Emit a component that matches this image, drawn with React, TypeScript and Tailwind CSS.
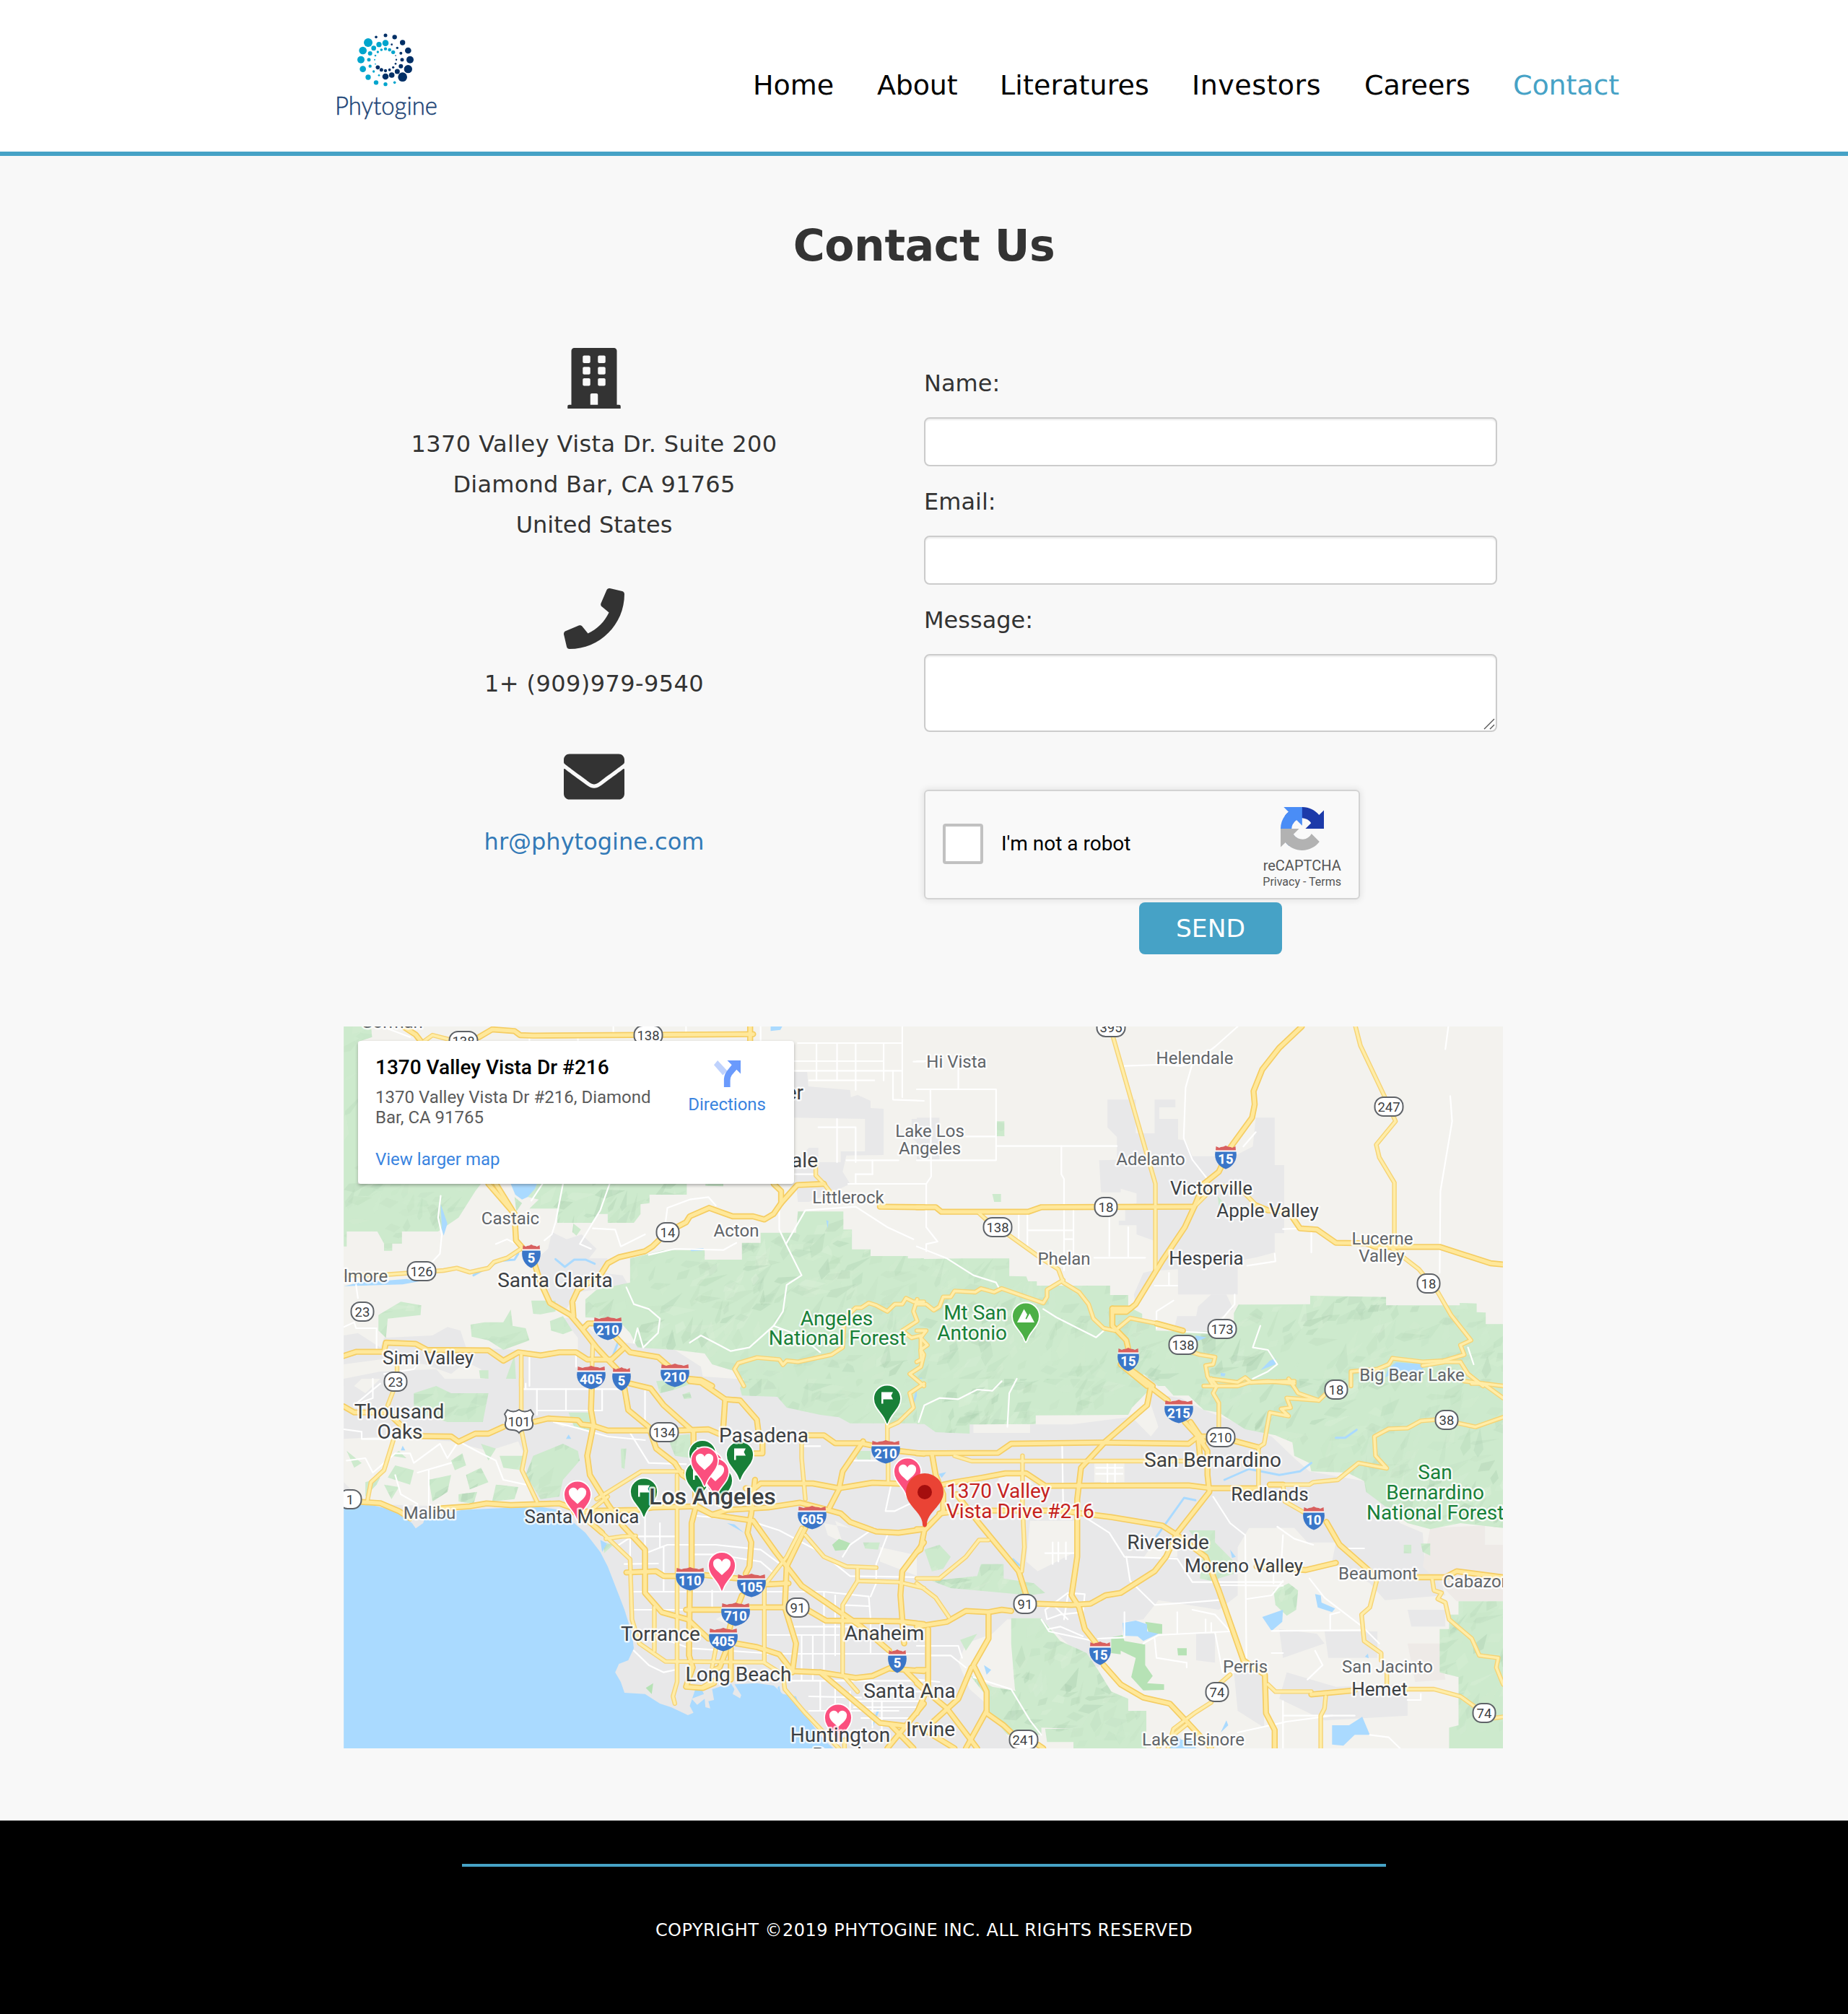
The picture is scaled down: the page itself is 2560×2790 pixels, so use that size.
import React from "react";
import { FaBuilding, FaPhone, FaEnvelope } from "react-icons/fa";

const SANS = "font-['Verdana','DejaVu_Sans',sans-serif]";

/* ---------- Logo ---------- */

const tealDots = [
  [210, 117, 18], [188, 150, 16], [180, 188, 15], [188, 227, 13], [210, 261, 11], [243, 283, 9.5], [282, 290, 8], [320, 283, 5.5],
  [282, 119, 13], [255, 125, 11], [233, 140, 10], [218, 162, 9], [213, 188, 7.5], [218, 215, 6.5], [233, 237, 5], [255, 253, 4],
  [314, 157, 8], [299, 147, 7], [282, 143, 6.5], [265, 147, 5.5], [250, 156, 5], [240, 171, 4], [237, 188, 3], [240, 206, 2.5],
];
const navyDots = [
  [243, 94, 5.5], [282, 87, 7.5], [320, 94, 9.5], [353, 117, 11], [376, 150, 13], [384, 188, 15], [376, 227, 17], [353, 260, 19],
  [308, 125, 4], [331, 139, 5], [346, 161, 6], [351, 188, 7.5], [346, 215, 9], [331, 237, 10.5], [308, 252, 11.5], [282, 258, 13],
  [250, 220, 8.5], [265, 230, 7.5], [282, 234, 6.5], [299, 230, 5.5], [314, 220, 5], [324, 205, 4], [327, 188, 3.5], [324, 171, 2.5],
];

function Logo() {
  return (
    <svg viewBox="0 0 600 540" className="mt-5 h-[180px] w-[200px] shrink-0">
      {tealDots.map(([x, y, r], i) => (
        <circle key={i} cx={x} cy={y} r={r} fill="#00a5cd" />
      ))}
      {navyDots.map(([x, y, r], i) => (
        <circle key={i} cx={x} cy={y} r={r} fill="#002f66" />
      ))}
      <text x="72" y="417" fontFamily="Lato" fontWeight="300" fontSize="104" textLength="426" lengthAdjust="spacingAndGlyphs" fill="#1d4577" stroke="#1d4577" strokeWidth="1.5">
        Phytogine
      </text>
    </svg>
  );
}

/* ---------- Map data: four tiles, each with its own grid ---------- */

type Tile = {
  id: string;
  transform: string;
  urban: string[];
  land?: string[];
  green: string[];
  park?: string[];
  blush?: string[];
  water: string[];
  creek?: string[];
  minor: string[];
  major: string[];
  thin: string[];
};

const tiles: Tile[] = [
  {
    id: "nw",
    transform: "matrix(.5165 0 0 .33333 -6 -12)",
    urban: [
      "570,890 610,920 650,900 690,960 670,1000 720,1000 700,1060 760,1070 775,1110 640,1140 600,1230 560,1180 520,1080 530,1000 560,960",
      "1220,225 1255,225 1258,285 1370,300 1372,330 1390,320 1425,345 1425,375 1460,378 1460,570 1360,572 1350,640 1370,690 1330,720 1260,765 1230,765 1220,600 1260,540 1285,540 1285,600 1345,600 1345,555 1410,555 1410,420 1220,415",
      "1535,420 1568,420 1568,540 1535,500",
      "250,1320 290,1285 325,1300 340,1370 480,1380 640,1400 640,1330 600,1250 630,1240 700,1330 770,1350 900,1380 970,1450 975,1490 1060,1500 1085,1530 400,1530 380,1460 340,1430 300,1480 230,1440 110,1420 12,1440 12,1320 50,1310 110,1370 120,1330",
      "12,1500 110,1470 260,1460 300,1530 12,1530",
    ],
    green: [
      "12,36 85,36 88,80 50,100 50,690 380,690 365,720 320,830 265,888 168,888 168,938 142,938 142,968 120,968 120,938 102,888 20,888 20,950 12,950",
      "485,690 932,690 932,735 832,735 832,770 808,775 808,815 790,852 720,852 720,815 695,815 678,852 585,852 585,793 510,793 535,755 480,735",
      "982,690 1030,690 1030,700 982,698",
      "628,855 648,880 636,905 625,890",
      "470,745 490,770 475,805",
      "1230,805 1352,805 1352,880 1375,880 1375,962 1425,962 1425,990 1525,990 1525,1000 1568,1000 1568,1530 1085,1530 1065,1470 1000,1440 980,1395 900,1380 800,1370 780,1310 745,1250 660,1245 660,1170 690,1130 780,1100 780,1000 870,965 980,965 980,1005 1080,1005 1080,935 1130,935 1130,893 1225,893",
      "105,1235 165,1180 220,1195 218,1235 130,1250 125,1330 105,1300",
      "352,1275 390,1265 440,1265 460,1212 465,1280 500,1290 510,1340 440,1380 400,1340 355,1325",
      "515,1175 580,1175 580,1220 540,1232 520,1230",
      "565,1260 600,1240 625,1300 600,1315 568,1300",
      "375,1465 400,1465 400,1500 378,1498",
      "470,1400 475,1530 440,1530",
    ],
    water: [
      "460,690 530,690 525,710 505,745 490,755 472,735",
      "272,775 290,855 280,905 275,880",
      "60,1098 120,1093 180,1085 215,1095 170,1108 12,1115",
      "1157,36 1188,36 1183,50 1157,55",
      "1306,840 1312,845 1310,875",
    ],
    creek: ["580,1003 605,1035 630,1005 660,1005 685,1022", "360,1070 430,1010 470,1005 480,980", "945,965 975,962", "735,1400 750,1340"],
    minor: [
      "1230,105 1510,105", "1220,180 1460,180", "1460,105 1460,260", "1385,105 1385,300", "1335,105 1335,260", "1280,105 1280,260",
      "1220,220 1510,220", "1260,260 1435,260", "1510,36 1510,330", "1540,182 1568,182", "1285,455 1385,455 1385,600", "1360,592 1500,592",
      "1365,690 1568,690", "1430,592 1430,650", "1335,420 1335,600", "1485,220 1485,340 1568,345", "1220,650 1278,650", "1385,650 1430,650",
      "735,36 735,68", "820,36 820,68", "930,36 930,68", "510,74 510,96", "640,74 640,96", "1130,36 1130,96", "860,74 860,96",
      "272,740 265,830 275,900 270,980 240,1030", "545,690 515,760", "600,690 580,850 570,900 550,925", "725,690 700,800 645,940 675,960",
      "875,850 880,790 940,755 990,745 1010,780", "1180,780 1180,880 1198,940 1240,1070 1200,1110 1190,1220 1165,1280 1100,1370 1050,1385 970,1320 940,1350",
      "1198,940 1250,800 1385,785 1470,870 1540,920", "770,1120 790,1190 830,1210 860,1250 855,1310 815,1370", "1065,935 1030,965 900,960 830,985",
      "510,1410 510,1530", "635,1400 635,1450", "1165,1280 1235,1320 1290,1390", "45,1110 50,1165", "12,1285 40,1265 45,1290 100,1290 100,1380",
      "120,1480 200,1460 215,1430", "680,875 740,880 755,950 820,900", "1385,690 1385,650", "790,1350 800,1290 815,1370", "130,45 190,80", "420,940 450,920 475,940",
    ],
    major: [
      "400,690 470,815 474,925 520,1005 540,1100 565,1185 620,1235 650,1290 690,1370 720,1420 745,1460",
      "420,690 470,815",
      "1165,690 1185,720 1185,770 1165,815 1140,838 1110,825 1055,825 992,790 940,825 930,850 880,890 840,950 820,970 750,995 720,1020 700,1070 640,1130 625,1180 628,1240",
      "1185,770 1228,695 1300,690",
      "375,80 410,48 470,55 485,72 520,74 1110,68", "1102,36 1102,96",
      "12,1405 45,1388 120,1388 125,1350 205,1355 235,1380 400,1382 440,1425 480,1390 540,1403 590,1390 635,1390 665,1420 730,1420 765,1370",
      "655,1290 668,1270 690,1270", "740,1325 780,1390 855,1410 885,1450", "935,1500 970,1505 1000,1530", "1450,785 1568,787",
      "175,40 205,70 220,100",
    ],
    thin: [
      "12,1070 120,1068 280,1050 315,1040 350,1057 400,1040 415,1015 450,998 485,962",
      "1278,600 1278,655 1300,690 1320,730", "1440,745 1450,785", "225,100 250,72 300,92", "680,1350 678,1450", "155,1440 155,1470", "488,1400 488,1530",
      "1085,1530 1060,1460 1070,1435 1120,1412 1180,1420 1190,1442 1200,1425 1230,1430 1320,1400 1350,1370 1355,1250 1385,1205 1400,1205 1420,1185 1440,1195 1470,1220 1490,1190 1510,1190 1520,1165 1540,1180 1568,1180",
      "1550,1170 1540,1220 1550,1260 1510,1300 1535,1330 1560,1320 1560,1380 1568,1400 1560,1450 1530,1480 1568,1530",
    ],
  },
  {
    id: "ne",
    transform: "matrix(.523 0 0 .33333 794 -12)",
    urban: [
      "505,340 580,340 580,480 630,480 630,340 685,340 685,372 642,372 642,420 692,420 692,505 712,510 730,575 840,575 890,535 898,415 948,415 948,612 973,612 973,895 948,895 948,975 900,995 850,1010 850,1150 692,1150 692,1045 640,1050 600,1150 580,1200 575,1150 600,1060 640,1045 635,930 582,900 582,862 535,862 535,843 552,843 552,780 582,770 582,730 540,710 540,725 488,725 483,592 530,590 530,495 505,455",
      "0,415 60,415 60,590 0,590",
      "745,1200 780,1150 820,1150 838,1210 800,1250 760,1310 680,1300 690,1240 740,1240",
      "600,1490 640,1500 650,1530 620,1530",
    ],
    green: [
      "0,1003 120,1000 245,1000 245,1073 290,1075 295,1095 318,1095 318,1113 512,1113 512,1152 560,1152 560,1200 597,1230 597,1258 633,1280 633,1300 740,1305 840,1300 840,1228 852,1192 1042,1190 1042,1155 1243,1160 1243,1195 1438,1195 1438,1185 1483,1187 1483,1223 1507,1225 1507,1273 1553,1273 1553,1530 640,1530 600,1480 605,1530 0,1530",
      "210,430 232,430 232,492 210,492", "200,732 223,732 223,765 205,765", "797,740 822,785 820,800 800,780",
    ],
    water: ["738,1320 768,1328 740,1345", "950,1415 950,1440 910,1465 935,1425", "1270,1432 1345,1440 1340,1462 1300,1475 1280,1465 1240,1495 1250,1455", "805,1475 818,1478 815,1490 805,1488"],
    minor: [
      "0,180 25,180", "110,210 110,297", "0,297 210,297 210,592 0,592", "36,300 38,660 25,690 25,870 55,930 25,940 25,970", "0,690 25,690", "210,533 530,533",
      "383,533 383,650 390,670 390,1050", "415,800 415,990", "295,883 412,883", "470,997 605,997", "130,493 210,493", "550,200 640,195 700,200 735,185 790,120 850,36",
      "730,190 712,290 707,500 730,590 775,680", "1408,36 1400,130", "1413,325 1418,430 1387,720 1385,1060", "0,950 80,1000 150,1070 210,1100 220,1130",
      "335,1210 370,1245 475,1328 495,1300", "910,1280 890,1370 930,1380 955,1440 930,1470 890,1500", "1460,1370 1475,1440", "270,820 270,920", "293,815 293,960",
      "510,830 510,990", "560,870 560,995", "970,878 1015,875", "1045,890 1045,975", "390,920 412,920", "865,535 898,475", "630,1113 690,1113", "668,1060 668,1113",
      "635,1290 635,1220 680,1175", "875,1030 950,1012 948,980", "842,1150 842,1190 820,1230 780,1310 710,1305",
    ],
    major: [
      "1020,36 960,125 915,215 892,305 895,360 888,415 830,540 800,640 760,690 735,785 710,870 650,1010 580,1190 555,1222 520,1222", "518,1208 565,1208",
      "518,1208 518,1280 555,1340 560,1375", "540,1440 610,1530", "565,1460 625,1530",
      "0,787 50,787 65,806 295,806 330,787 735,785", "900,780 930,800 985,805 1015,875 1060,880 1110,935 1190,937 1215,952 1385,952 1520,1020 1553,1025",
      "635,1270 705,1300",
    ],
    thin: [
      "520,80 632,690 632,1045", "735,785 790,700 850,700 900,780", "1162,36 1175,115 1240,330 1268,430 1217,527 1225,580 1265,685 1265,950",
      "1260,960 1330,1045 1380,1140 1415,1235 1468,1340 1440,1360 1450,1400 1395,1425 1340,1430 1260,1415",
      "165,812 185,840 250,910 330,1000 375,1045 388,1100 430,1140 455,1190 468,1250 495,1290 525,1300 565,1248 635,1270 705,1300",
      "730,1390 750,1400 790,1410 785,1440 765,1445 770,1490 785,1530",
      "388,1090 345,1130 345,1160 335,1185 225,1125 205,1140 170,1125 155,1140 100,1135 90,1160 70,1160 60,1200 45,1215 25,1190 0,1190",
      "0,1300 25,1300 10,1330 28,1360 10,1380 12,1420 0,1430", "775,1500 850,1515 870,1495 885,1515 930,1510 1000,1520",
      "1440,1430 1460,1480 1500,1530", "1260,1415 1250,1440 1220,1460 1150,1470 1150,1530", "1340,1445 1400,1430 1440,1430", "1450,1510 1553,1530",
    ],
  },
  {
    id: "sw",
    transform: "matrix(.5165 0 0 .33333 -6 488)",
    urban: ["12,0 1570,0 1570,1536 12,1536"],
    land: [
      "12,250 130,240 300,260 400,300 480,260 500,330 500,430 520,510 400,525 290,530 70,520 12,430", "1300,600 1370,620 1330,590 1350,680 1310,650",
      "1450,700 1568,740 1568,830 1450,760", "560,170 650,180 600,200", "60,0 110,0 70,60 40,30", "1010,1000 1050,960 1040,1020",
    ],
    green: [
      "1085,0 1568,0 1568,185 1370,185 1340,160 1290,150 1200,120 1175,75 1080,70 1075,40", "200,60 260,30 300,60 400,60 385,180 290,180 230,150 200,120",
      "520,320 600,270 640,300 645,340 600,420 590,490 540,500 500,400", "880,240 940,230 945,330 900,320", "615,140 680,140 680,220 630,200", "850,10 930,0 945,20 900,45 860,60",
      "920,65 940,55 945,80 925,85", "755,290 770,290 765,375 757,370", "70,430 110,410 100,440 70,490", "150,360 200,380 190,440 130,410", "240,420 300,400 290,470 250,510",
      "340,400 380,370 400,430 350,460", "430,320 500,320 490,380 440,370", "20,300 60,350 40,370", "380,270 420,290 400,340", "140,320 160,300 180,330", "300,340 330,310 340,360 310,380",
      "120,440 160,450 140,500", "420,440 480,450 470,500 410,510", "320,480 370,470 360,520 320,510", "1380,300 1425,300 1425,335 1390,335", "710,680 735,690 710,725",
      "1215,1080 1225,1080 1222,1140", "1405,680 1450,680 1445,710 1410,705",
    ],
    park: ["1322,690 1340,665 1372,685 1365,710 1330,715", "822,1285 842,1265 838,1310"],
    water: [
      "12,520 60,515 150,548 195,600 205,622 225,600 230,575 330,545 530,530 590,545 630,600 660,640 700,720 720,780 745,880 765,960 785,1060 790,1120 775,1170 750,1185 740,1220 755,1260 765,1305 820,1310 860,1350 890,1365 935,1398 950,1388 940,1360 955,1290 970,1285 978,1310 945,1330 960,1355 980,1330 982,1365 995,1370 990,1340 1005,1335 1000,1290 1050,1265 1060,1290 1055,1310 1075,1328 1078,1315 1060,1270 1120,1265 1165,1275 1190,1310 1225,1320 1235,1360 1265,1430 1300,1500 1325,1536 12,1536",
      "700,670 718,685 705,720", "608,250 615,232 622,250", "165,298 170,278 177,298", "1040,600 1060,605 1085,640", "1175,1285 1180,1275 1185,1310",
    ],
    creek: ["1445,1380 1430,1440", "1560,0 1548,60 1540,100"],
    minor: [
      "490,43 760,43", "530,132 705,132", "530,43 530,150", "608,43 608,130", "705,43 705,132", "820,50 820,215", "780,225 830,350 930,355", "820,560 820,700", "800,655 910,655",
      "830,720 880,690 1010,690 1130,710 1200,790", "790,885 1300,885 1420,905 1425,1000", "790,960 930,960", "765,770 855,768", "950,730 1010,730 1130,760 1160,800", "960,570 1100,590 1180,630 1290,720 1370,820 1568,825",
      "1220,1030 1400,1030", "1145,1065 1340,1065", "1140,1143 1568,1143", "1190,1255 1568,1255", "1300,885 1300,1210", "1240,280 1290,280", "1425,1000 1425,1140",
      "1260,1380 1500,1380", "1370,1300 1370,1400", "1430,1255 1430,1450", "1290,1255 1290,1380", "1380,1340 1568,1340", "1400,1410 1540,1410", "1240,1070 1240,1250", "1330,900 1330,1150",
      "1260,1320 1400,1325", "1330,1255 1330,1400", "1450,1300 1568,1300", "1270,1070 1270,1250", "1350,940 1420,945", "1380,1365 1568,1365", "1455,1340 1455,1480",
      "575,180 640,205 720,240 820,255", "1480,440 1465,550 1490,550 1530,520", "1435,620 1370,690 1350,740", "110,20 40,110", "90,0 90,80 40,110", "1470,650 1440,770 1440,850 1425,905",
      "20,340 70,330 90,390 150,310 190,310 200,350 270,270 290,330 320,260 380,310 420,340 440,420 500,440", "150,400 165,480 210,520", "240,380 240,520", "210,390 300,350",
      "12,210 60,220 60,250 140,250", "790,1130 830,1190 870,1220 900,1210", "740,700 780,660", "1380,340 1470,340", "780,640 780,880", "830,1060 940,1120 1140,1140", "1470,300 1470,430",
      "500,43 500,20", "860,600 860,700", "1000,880 1000,960", "870,700 870,880",
    ],
    major: [
      "12,115 40,140 130,140 170,200", "200,238 300,240 320,262 365,228 400,228 440,200", "525,178 560,165 640,172 650,190 680,195 720,215 835,215", "910,215 990,210 1020,230",
      "1250,235 1300,235 1330,268 1400,268 1500,300 1568,312", "677,40 675,130 682,190 665,320 672,400 720,520 760,610 820,710 820,890 865,970 935,1000 990,1080",
      "1065,1100 1120,1115 1180,1145 1215,1215 1290,1220 1385,1243 1430,1235 1480,1200", "765,40 775,130 830,200 850,290 900,350 920,400 960,440", "780,20 835,40 870,110 950,220 950,280",
      "955,530 1000,565 1110,590 1170,720 1240,860 1400,1030 1475,1130", "940,10 970,15 1035,85 1075,90 1120,170 1125,230", "1035,85 1030,200", "1125,230 1135,250 1135,310 1115,310",
      "60,512 110,517 160,550 190,580", "260,540 350,530 395,518 460,525 590,518 630,540 705,640", "630,555 700,548 800,545 840,535 960,530 1000,565 1040,545 1150,535 1235,515 1310,545 1345,560 1370,595 1440,635 1500,640 1568,625",
      "1090,455 1110,460 1130,435 1270,435 1340,455 1430,432 1568,440", "955,450 955,540 945,600 945,790", "940,880 938,1150 948,1200 930,1280 975,1285 1005,1265", "1115,420 1105,560 1095,640 1105,680 1100,780 1090,810",
      "1080,900 1070,940", "1050,1020 1045,1050", "1040,1120 1020,1200 1005,1210", "1050,1120 1050,1250", "1250,620 1200,780 1195,950 1225,1100 1215,1220", "770,805 850,800 870,820 905,820",
      "975,815 1070,830", "1140,855 1205,850", "930,960 1030,960", "1100,950 1200,950", "1255,960 1305,1005 1500,1008 1568,1020", "1405,260 1350,385 1340,460 1315,535",
      "1568,680 1510,800 1505,900 1515,1100", "1290,1220 1450,1430 1530,1445", "1520,1215 1568,1290", "1568,1350 1470,1536", "1480,1440 1540,1536", "1480,1205 1568,1215",
    ],
    thin: [
      "488,0 488,210 500,300 490,380 530,510", "145,50 130,110", "145,255 120,380 85,430 75,510", "705,640 780,750 785,1000 805,1100 875,1175 1140,1178", "1470,185 1470,260",
      "1472,200 1500,180 1540,120 1530,60 1568,20", "906,400 906,1260 895,1320 900,1350", "845,950 845,1130", "690,500 810,385 920,385", "1240,250 1240,330 1250,500", "1472,340 1472,432",
      "1240,620 1200,740 1140,860 1140,1180 1190,1230 1195,1290 1250,1390 1340,1536", "1250,650 1300,740 1360,780 1440,785", "1390,790 1390,840 1500,845 1568,870", "1390,840 1350,940 1350,1230 1390,1300",
      "715,665 760,655 795,653", "1010,1120 1000,1200", "970,1285 1020,1240", "1355,1500 1355,1536", "680,540 720,490",
    ],
  },
  {
    id: "se",
    transform: "matrix(.523 0 0 .33333 794 488)",
    urban: [
      "0,188 150,190 150,225 300,225 300,190 410,190 560,160 620,60 700,80 760,130 940,240 1000,330 1040,385 1185,425 1190,470 1230,500 1280,600 1340,640 1345,740 1380,800 1400,900 1240,920 1200,850 1100,760 1110,680 1000,680 1000,620 880,620 850,700 850,900 800,960 640,920 600,1000 550,1010 540,1100 480,1200 440,1160 330,1000 240,1000 200,1060 130,1100 110,1180 140,1290 220,1400 250,1536 0,1536",
      "960,1040 1060,1060 1080,1100 970,1160", "1080,1050 1220,1050 1220,1160 1090,1160", "840,1220 920,1230 920,1450 850,1380", "980,1220 1110,1280 1300,1270 1300,1400 1080,1420 960,1330",
      "1300,960 1400,960 1400,1030 1310,1030", "740,1060 790,1060 790,1180 740,1170",
    ],
    land: ["220,400 290,400 310,440 210,450", "300,590 420,590 420,720 320,800 290,760", "950,620 1000,620 1070,740 990,740 900,700", "560,100 610,60 640,200 620,240 570,160", "620,700 690,690 690,740 600,745", "470,350 550,350 550,430 470,430"],
    blush: ["1360,620 1505,610 1505,690 1553,690 1553,925 1430,925 1340,780", "1300,1100 1385,1100 1400,1250 1320,1260"],
    green: [
      "0,0 590,0 620,40 570,120 560,150 315,152 315,188 140,190 140,228 50,222 20,188 0,188",
      "640,0 1553,0 1553,620 1440,600 1360,625 1300,600 1190,470 1185,425 1140,390 1045,385 1040,350 1000,320 995,265 950,235 870,210 800,140 760,130 720,70 680,70",
      "40,840 160,820 170,770 230,770 230,830 310,850 340,890 300,900 160,880 90,870", "20,710 60,690 90,740 70,790 40,800",
      "250,995 330,995 380,1090 450,1140 480,1210 515,1300 560,1330 560,1380 608,1380 608,1536 415,1536 415,1455 330,1450 290,1400 260,1290 250,1100", "115,1085 160,1060 130,1130",
      "140,1230 200,1280 270,1300 290,1400 330,1450 330,1480 240,1480 190,1390 180,1310", "720,630 790,630 790,680 840,760 840,810 780,840 750,830 760,700", "945,880 985,850 1010,880 1005,960 980,985 950,940",
      "1435,925 1553,925 1553,1536 1410,1536 1410,1450 1435,1440 1435,1240 1385,1220 1385,1040 1410,1040 1410,980 1435,980", "1290,690 1310,690 1310,725 1290,725", "1335,685 1360,685 1360,735 1340,720",
      "340,1455 415,1455 415,1510 345,1510",
    ],
    park: ["515,1075 545,1065 550,1090 605,1105 605,1190 625,1235 610,1265 655,1270 655,1293 600,1295 568,1240 580,1160 540,1130 540,1145 515,1140", "605,1010 650,1020 650,1060 615,1060", "690,1120 715,1120 715,1150 692,1150"],
    water: [
      "545,1015 580,1005 610,1020 610,1050 640,1060 600,1090 585,1070 548,1068", "915,990 970,960 968,1010 940,1048", "1055,895 1070,900 1072,930 1108,955 1100,970 1062,950",
      "1100,1440 1145,1440 1180,1405 1200,1480 1160,1480 1130,1525 1100,1520", "178,1190 197,1210 185,1230", "805,1470 820,1420 825,1440", "830,710 845,740 835,745", "685,1470 700,1500 730,1500 740,1536 670,1536",
      "58,395 78,388 66,412", "1187,1155 1195,1142 1197,1162",
    ],
    creek: ["738,505 708,495 635,655", "815,420 880,375 960,400 1015,385 1045,350", "1110,245 1135,245 1165,212", "255,750 272,775"],
    minor: [
      "385,270 388,550", "785,490 830,600 870,650 873,1160", "450,580 510,640 550,740 690,748 730,845 970,845", "555,740 565,840 630,940 720,930 800,920", "805,858 970,860", "875,915 940,900 970,840",
      "955,615 1000,665 1050,690", "550,970 550,1075 480,1080", "640,1065 830,1050", "600,1100 640,1065", "690,970 690,1060", "940,1048 1180,1045", "1040,830 1080,910 1180,1030 1225,1100", "970,1340 970,1536",
      "730,960 790,980 830,1050", "765,1000 765,1055", "780,1015 780,1050", "340,960 400,890 445,895 440,970 380,980 345,1000 340,960", "350,1040 380,1030 440,1070", "330,1000 350,1050 470,1090",
      "630,1080 635,1160 715,1180 715,1200", "790,1055 810,1220 860,1220", "1055,1130 1075,1190 1035,1250", "940,1140 970,1140", "850,1470 980,1425 1100,1400", "1200,1480 1250,1490 1280,1536", "340,725 415,725",
      "360,680 360,770", "375,680 375,760", "395,680 395,750", "0,1110 110,1110 120,1160", "150,1240 250,1290 300,1420 330,1480", "265,0 245,60 240,200", "5,180 20,110 60,80 110,85 160,45 200,50 225,10",
      "475,370 545,370", "475,395 545,395", "505,350 505,430", "525,355 525,430", "970,650 965,780", "945,810 945,850", "1095,1040 1095,980 1120,970", "30,1150 90,1150 130,1200", "0,1250 60,1260",
      "1130,705 1185,705", "355,930 400,1000", "400,900 390,1000", "970,1400 1160,1400", "1300,1335 1335,1335 1335,1310",
    ],
    major: [
      "0,310 215,308 250,270 485,265 720,270 745,240 770,240", "845,260 905,285", "70,440 100,430 170,412 235,393 290,393 340,445 720,443 780,455 905,455", "935,440 970,440",
      "1085,595 1120,690 1200,800", "620,30 610,110 500,260 435,370 425,500 425,740 410,900 430,950 445,1040 480,1110", "495,1190 540,1270 600,1325 670,1350 730,1450 780,1536",
      "590,0 665,90", "710,180 745,240 770,300 770,400 775,470 690,640", "725,180 760,260", "745,240 750,320",
      "60,560 120,548 380,548 515,575 650,610 690,650 765,740 800,880 865,1170 922,1230 925,1390 948,1460 948,1536", "690,640 660,740 630,800 540,890 500,900 460,935 410,940 320,935", "250,965 225,960 190,970 130,965 80,1010 0,1030",
      "105,480 165,600 270,800 290,900", "40,310 50,400 70,480 70,550 20,630 10,710 0,720", "1320,825 1400,825 1430,800 1553,825", "190,980 190,1080 150,1190 185,1300 185,1390 230,1440 250,1470",
      "0,1265 80,1370 160,1536", "145,1200 110,1330 40,1430", "30,1040 30,1280 0,1390", "185,1380 130,1536", "0,1440 100,1536", "0,1210 25,1210", "320,1520 335,1536", "0,625 20,625",
      "1045,1312 1160,1295", "900,780 1030,795 1110,765",
    ],
    thin: [
      "905,285 920,270 935,140 985,155 965,125 990,120 980,80 1065,90 1085,60", "100,320 145,342 600,342 720,342", "905,455 905,290", "935,440 1040,440 1050,430 1115,420 1170,350 1245,372 1215,320 1212,240 1250,208 1300,205 1335,175 1375,170",
      "970,440 975,510 1025,555", "1200,800 1218,840 1200,950 1178,980 1185,1090 1230,1140 1230,1170", "1435,185 1480,200 1553,160", "190,670 165,670 130,740 60,830 0,830", "0,850 50,910 85,990",
      "280,320 280,520 285,700 278,800", "1365,830 1370,880 1390,890 1380,915 1400,930 1410,1000 1470,1080 1490,1150 1540,1160 1535,1200 1553,1270", "780,0 795,30 785,60 800,100 800,200",
      "830,1230 800,1270", "780,1345 735,1390 680,1455 665,1536", "930,1270 950,1300 1045,1300", "1290,1290 1370,1290 1440,1320 1480,1365", "1530,1410 1553,1405", "1083,1320 1080,1370 1070,1400 1070,1536",
      "1245,1210 1245,1270", "985,0 1010,60 1065,90", "1470,20 1500,20 1553,80", "760,30 850,30 880,15 1000,10", "640,1530 720,1430",
    ],
  },
];

/* Deterministic facets that suggest shaded relief inside the forests. */
function facets(seed: number, count: number) {
  let s = seed;
  const rnd = () => {
    s = (s * 16807) % 2147483647;
    return s / 2147483647;
  };
  const out: { d: string; fill: string; o: number }[] = [];
  for (let i = 0; i < count; i++) {
    const x = rnd() * 1568;
    const y = rnd() * 1536;
    const a = -0.75 + (rnd() - 0.5) * 1.5;
    const l = 30 + rnd() * 60;
    const w = 12 + rnd() * 24;
    const p = [
      [x, y],
      [x + Math.cos(a + 0.5) * w, y + Math.sin(a + 0.5) * w * 1.5],
      [x + Math.cos(a) * l, y + Math.sin(a) * l * 1.5],
      [x + Math.cos(a - 0.6) * w * 0.8, y + Math.sin(a - 0.6) * w * 1.2],
    ];
    const ridge = 0.5 + 0.5 * Math.sin(x / 150 + y / 110 + seed);
    const dark = rnd() > 0.38;
    out.push({
      d: p.map((q) => q.map((v) => v.toFixed(0)).join(",")).join(" "),
      fill: dark ? "#a6caab" : "#e0f2dc",
      o: (0.06 + rnd() * 0.2) * (0.5 + ridge),
    });
  }
  return out;
}

const Fill = ({ list, color }: { list?: string[]; color: string }) => (
  <>
    {(list ?? []).map((p, i) => (
      <polygon key={i} points={p} fill={color} />
    ))}
  </>
);

const Lines = ({ list, color, w }: { list?: string[]; color: string; w: number }) => (
  <>
    {(list ?? []).map((p, i) => (
      <polyline key={i} points={p} fill="none" stroke={color} strokeWidth={w} strokeLinejoin="round" strokeLinecap="round" vectorEffect="non-scaling-stroke" />
    ))}
  </>
);

type Label = [text: string, x: number, y: number, size: number, kind: "town" | "city" | "park" | "hit" | "metro", anchor?: "start" | "middle" | "end"];

const labels: Label[] = [
  ["Gorman", 67, 2, 24, "town"], ["er", 637, 101, 28, "city", "end"], ["ale", 657, 195, 28, "city", "end"], ["Castaic", 231, 274, 24, "town"],
  ["Acton", 544, 291, 24, "town"], ["Littlerock", 699, 245, 24, "town"], ["Lake Los", 812, 153, 24, "town"], ["Angeles", 812, 177, 24, "town"],
  ["lmore", 0, 354, 24, "town", "start"], ["Santa Clarita", 293, 361, 28, "city"], ["Simi Valley", 117, 468, 26, "city"], ["Angeles", 683, 414, 28, "park"],
  ["National Forest", 684, 441, 28, "park"], ["Hi Vista", 849, 57, 24, "town"], ["Helendale", 1179, 52, 24, "town"], ["Adelanto", 1118, 192, 24, "town"],
  ["Victorville", 1202, 233, 26, "city"], ["Apple Valley", 1280, 264, 26, "city"], ["Hesperia", 1195, 330, 26, "city"], ["Phelan", 998, 330, 24, "town"],
  ["Lucerne", 1439, 302, 24, "town"], ["Valley", 1438, 326, 24, "town"], ["Mt San", 919, 406, 28, "park", "end"], ["Antonio", 919, 434, 28, "park", "end"],
  ["Big Bear Lake", 1480, 491, 24, "town"], ["Thousand", 77, 543, 28, "city"], ["Oaks", 78, 571, 28, "city"], ["Pasadena", 582, 576, 28, "city"],
  ["Los Angeles", 511, 662, 32, "metro"], ["Malibu", 119, 682, 24, "town"], ["Santa Monica", 330, 688, 26, "city"], ["Torrance", 439, 851, 28, "city"],
  ["Long Beach", 547, 907, 28, "city"], ["Anaheim", 749, 850, 28, "city"], ["Santa Ana", 784, 930, 28, "city"], ["Huntington", 688, 991, 28, "city"],
  ["Beach", 688, 1019, 28, "city"], ["Irvine", 813, 983, 28, "city"], ["1370 Valley", 835, 653, 28, "hit", "start"], ["Vista Drive #216", 835, 681, 28, "hit", "start"],
  ["San Bernardino", 1204, 610, 28, "city"], ["San", 1512, 627, 28, "park"], ["Bernardino", 1512, 655, 28, "park"], ["National Forest", 1417, 683, 28, "park", "start"],
  ["Redlands", 1283, 657, 26, "city"], ["Riverside", 1142, 724, 28, "city"], ["Moreno Valley", 1247, 756, 26, "city"], ["Beaumont", 1433, 766, 24, "town"],
  ["Cabazon", 1523, 777, 24, "town", "start"], ["Perris", 1249, 895, 24, "town"], ["San Jacinto", 1446, 895, 24, "town"], ["Hemet", 1435, 927, 26, "city"],
  ["Lake Elsinore", 1177, 996, 24, "town"],
];

const labelColor = { town: "#616569", city: "#3c4043", park: "#188038", hit: "#c5221f", metro: "#3c4043" };

const routes: [string, number, number][] = [
  ["138", 166, 20], ["138", 422, 12], ["14", 449, 285], ["126", 108, 339], ["23", 26, 395], ["23", 72, 492], ["395", 1063, 1], ["247", 1448, 111],
  ["18", 1056, 250], ["138", 906, 278], ["18", 1503, 356], ["173", 1217, 419], ["138", 1163, 441], ["134", 444, 562], ["1", 9, 655], ["91", 629, 805],
  ["18", 1375, 503], ["38", 1528, 545], ["210", 1215, 569], ["91", 944, 800], ["74", 1210, 922], ["74", 1580, 951], ["241", 942, 988],
];

const interstates: [string, number, number][] = [
  ["5", 260, 318], ["210", 366, 418], ["405", 343, 486], ["5", 385, 488], ["210", 459, 483], ["15", 1222, 181], ["15", 1087, 461], ["210", 751, 589],
  ["605", 649, 680], ["110", 480, 765], ["105", 565, 774], ["710", 543, 814], ["405", 526, 849], ["5", 767, 879], ["215", 1157, 533], ["10", 1344, 681], ["15", 1048, 868],
];

function Interstate({ n, x, y }: { n: string; x: number; y: number }) {
  const w = n.length === 3 ? 20 : n.length === 2 ? 15 : 13;
  return (
    <g transform={`translate(${x} ${y})`}>
      <path d={`M${-w + 1.5} -15 L${-w * 0.6} -13 L${-w * 0.45} -14 Q${-w * 0.2} -14 0 -16 Q${w * 0.2} -14 ${w * 0.45} -14 L${w * 0.6} -13 L${w - 1.5} -15 L${w - 1} -9 H${-w + 1} Z`} fill="#d8605f" />
      <rect x={-w + 0.5} y={-9.5} width={w * 2 - 1} height={2.5} fill="#fff" />
      <path d={`M${-w + 0.5} -7.5 H${w - 0.5} C${w + 1.5} 4 ${w - 5} 13 0 16.5 C${-w + 5} 13 ${-w - 1.5} 4 ${-w + 0.5} -7.5 Z`} fill="#3a76c8" />
      <text y="8.5" textAnchor="middle" fontFamily="Roboto" fontSize="18" fontWeight="500" fill="#fff" stroke="#fff" strokeWidth="0.5" letterSpacing="0.3">
        {n}
      </text>
    </g>
  );
}

const PIN = "M0 36 C-1 36 -2 33 -3 30.5 C-7 20 -19 13 -19 0 A19 19 0 1 1 19 0 C19 13 7 20 3 30.5 C2 33 1 36 0 36 Z";

function Pin({ x, y, kind }: { x: number; y: number; kind: "flag" | "heart" | "peak" }) {
  const fill = kind === "flag" ? "#188038" : kind === "heart" ? "#fb4f7e" : "#4caf46";
  return (
    <g transform={`translate(${x} ${y})`}>
      <path d={PIN} fill={fill} stroke="#fff" strokeWidth="1.8" />
      {kind === "flag" && <path d="M-8 -9 H8 L5.5 -4 L8 1 H-5.500 V7 H-8 Z" fill="#fff" />}
      {kind === "heart" && <path d="M0 13 C-5 8 -12 3.500 -12 -2.500 A6.2 6.2 0 0 1 0 -5.500 A6.2 6.2 0 0 1 12 -2.500 C12 3.500 5 8 0 13 Z" fill="#fff" />}
      {kind === "peak" && <path d="M-12 8.500 L-2.500 -10 L2 -2.500 L-0.500 3.500 L1 4 L5.500 -4 L12 8.500 Z" fill="#fff" />}
    </g>
  );
}

function MapCanvas() {
  return (
    <svg viewBox="0 0 1606 1000" className="block h-[1000px] w-[1606px]" fontFamily="Roboto, sans-serif">
      <rect width="1606" height="1000" fill="#f3f2ee" />
      {tiles.map((t, i) => (
        <g key={t.id} transform={t.transform}>
          <clipPath id={`forest-${t.id}`}>
            {t.green.map((p, k) => (
              <polygon key={k} points={p} />
            ))}
          </clipPath>
          <Fill list={t.urban} color="#e8e8e9" />
          <Fill list={t.land} color="#f3f2ee" />
          <Fill list={t.blush} color="#eeeae7" />
          <Fill list={t.green} color="#cdeacd" />
          <g clipPath={`url(#forest-${t.id})`}>
            {facets(97 + i * 131, 1000).map((f, k) => (
              <polygon key={k} points={f.d} fill={f.fill} opacity={f.o} />
            ))}
          </g>
          <Fill list={t.park} color="#b6e2b5" />
          <Fill list={t.water} color="#aadaff" />
          <Lines list={t.creek} color="#aadaff" w={3} />
        </g>
      ))}
      {tiles.map((t) => (
        <g key={t.id} transform={t.transform}>
          <Lines list={t.minor} color="#ffffff" w={2.2} />
        </g>
      ))}
      {tiles.map((t) => (
        <g key={t.id} transform={t.transform}>
          <Lines list={t.thin} color="#f6d374" w={6.4} />
          <Lines list={t.major} color="#f5cd62" w={8.4} />
        </g>
      ))}
      {tiles.map((t) => (
        <g key={t.id} transform={t.transform}>
          <Lines list={t.thin} color="#ffeda8" w={3.6} />
          <Lines list={t.major} color="#ffe89a" w={5} />
        </g>
      ))}
      {routes.map(([n, x, y], i) => {
        const w = n.length === 3 ? 39 : 31;
        return (
          <g key={i}>
            <rect x={x - w / 2} y={y - 13} width={w} height={26} rx={12} fill="#fff" stroke="#5f6368" strokeWidth="2" />
            <text x={x} y={y + 6.5} textAnchor="middle" fontSize="18.5" fill="#3c4043">
              {n}
            </text>
          </g>
        );
      })}
      <g transform="translate(243 546)">
        <path d="M-16 -15 Q-8 -10 0 -15 Q8 -10 16 -15 L20 -9 Q16 -3 19 3 Q20 13 9 13 Q3 13 0 17 Q-3 13 -9 13 Q-20 13 -19 3 Q-16 -3 -20 -9 Z" fill="#fff" stroke="#5f6368" strokeWidth="2" />
        <text y="7.5" textAnchor="middle" fontSize="18.5" fill="#3c4043">
          101
        </text>
      </g>
      {interstates.map(([n, x, y], i) => (
        <Interstate key={i} n={n} x={x} y={y} />
      ))}
      <Pin x={753} y={515.5} kind="flag" />
      <Pin x={497} y={592} kind="flag" />
      <Pin x={549} y={593.5} kind="flag" />
      <Pin x={492} y={621} kind="flag" />
      <Pin x={520} y={629} kind="flag" />
      <Pin x={416} y={644.500} kind="flag" />
      <Pin x={324} y={648.500} kind="heart" />
      <Pin x={507} y={607} kind="heart" />
      <Pin x={515} y={617} kind="heart" />
      <Pin x={500} y={601.500} kind="heart" />
      <Pin x={524} y={747} kind="heart" />
      <Pin x={685} y={957.500} kind="heart" />
      <Pin x={781} y={616.500} kind="heart" />
      <Pin x={945} y={401.500} kind="peak" />
      {labels.map(([t, x, y, size, kind, anchor], i) => (
        <text
          key={i}
          x={x}
          y={y}
          fontSize={size}
          fontWeight={kind === "metro" ? 500 : 400}
          textAnchor={anchor ?? "middle"}
          fill={labelColor[kind]}
          stroke="#ffffff"
          strokeOpacity="0.8"
          strokeWidth="5"
          strokeLinejoin="round"
          paintOrder="stroke"
        >
          {t}
        </text>
      ))}
      <path d="M805 693.500 C803.500 693.500 802 692 802 690 C802 673 779 664 779 645 A26 26 0 1 1 831 645 C831 664 808 673 808 690 C808 692 806.500 693.500 805 693.500 Z" fill="#ea4335" />
      <circle cx="805" cy="645" r="10" fill="#a50e0e" />
    </svg>
  );
}

function PlaceCard() {
  return (
    <div className="absolute top-5 left-5 flex h-[198px] w-[604px] justify-between rounded-[4px] bg-white pr-[39px] pl-6 font-['Roboto',sans-serif] shadow-[0_2px_4px_rgba(0,0,0,0.3)]">
      <div>
        <p className="mt-5 text-[28px] leading-[34px] font-medium whitespace-nowrap text-black">1370 Valley Vista Dr #216</p>
        <p className="mt-[10px] w-[400px] text-[24px] leading-[28px] text-[#5b5b5b]">
          1370 Valley Vista Dr #216, Diamond
          <br />
          Bar, CA 91765
        </p>
        <p className="mt-[30px] text-[24px] leading-[28px] text-[#3a84df]">View larger map</p>
      </div>
      <div className="flex flex-col items-center pt-[27px]">
        <svg viewBox="0 0 36 36" className="h-[37px] w-[37px]">
          <path d="M5 0 L0 6 L12 20 L18 14 Z" fill="#bfd2fd" />
          <path d="M18 0 H36 V18 L30.5 12.5 L24 20 Q22 23 22 27 V36 H13.500 V25 Q14 18 18 13.500 L24 6 Z" fill="#6a9afc" />
        </svg>
        <span className="mt-[10px] text-[24px] leading-[28px] text-[#3a84df]">Directions</span>
      </div>
    </div>
  );
}

/* ---------- Page ---------- */

const field = "block w-[794px] rounded-[8px] border-2 border-[#cccccc] bg-white shadow-[inset_0_2px_2px_rgba(0,0,0,0.075)] outline-none";
const labelCls = "block text-[32px] leading-[56px] text-[#333333]";

function Captcha() {
  return (
    <div className="mt-20 flex h-[152px] w-[604px] items-center rounded-[6px] border-2 border-[#d3d3d3] bg-[#f9f9f9] pl-6 font-['Roboto',sans-serif] shadow-[0_0_8px_2px_rgba(0,0,0,0.08)]">
      <span className="mb-[3px] h-14 w-14 rounded-[4px] border-4 border-[#c1c1c1] bg-white" />
      <span className="mb-[2px] ml-[25px] text-[28px] leading-[34px] text-black">I'm not a robot</span>
      <div className="mr-[24px] ml-auto flex flex-col items-center text-[#555555]">
        <svg viewBox="0 0 64 64" className="mt-[9px] h-[60px] w-[60px]">
          <path fill="#1c3aa9" d="M64 31.955l-.033-1.37V4.687l-7.16 7.16C50.948 4.674 42.033.093 32.05.093c-10.4 0-19.622 4.96-25.458 12.64l11.736 11.86a15.55 15.55 0 0 1 4.754-5.334c2.05-1.6 4.952-2.906 8.968-2.906.485 0 .86.057 1.135.163 4.976.393 9.288 3.14 11.828 7.124l-8.307 8.307L64 31.953" />
          <path fill="#4a8df6" d="M31.862.094l-1.37.033H4.594l7.16 7.16C4.58 13.147 0 22.06 0 32.046c0 10.4 4.96 19.622 12.64 25.458L24.5 45.768a15.55 15.55 0 0 1-5.334-4.754c-1.6-2.05-2.906-4.952-2.906-8.968 0-.485.057-.86.163-1.135.393-4.976 3.14-9.288 7.124-11.828l8.307 8.307L31.86.095" />
          <path fill="#b2b2b2" d="M.001 32.045l.033 1.37v25.898l7.16-7.16c5.86 7.173 14.774 11.754 24.76 11.754 10.4 0 19.622-4.96 25.458-12.64l-11.736-11.86a15.55 15.55 0 0 1-4.754 5.334c-2.05 1.6-4.952 2.906-8.968 2.906-.485 0-.86-.057-1.135-.163-4.976-.393-9.288-3.14-11.828-7.124l8.307-8.307c-10.522.04-22.4.066-27.295-.005" />
        </svg>
        <span className="mt-[9px] text-[20px] leading-[24px]">reCAPTCHA</span>
        <span className="mt-px text-[16px] leading-[20px]">Privacy - Terms</span>
      </div>
    </div>
  );
}

export default function App() {
  return (
    <div className={`flex min-h-[2790px] w-[2560px] flex-col bg-[#f8f8f8] text-[#333333] ${SANS}`}>
      <header className="flex h-[216px] border-b-6 border-[#46a2c6] bg-white pl-[440px]">
        <Logo />
        <nav className="mt-[88px] ml-[403px] flex text-[38px] leading-[60px] whitespace-nowrap text-black">
          <a className="w-[172px]">Home</a>
          <a className="w-[170px] tracking-[-0.2px]">About</a>
          <a className="w-[266px] tracking-[0.1px]">Literatures</a>
          <a className="w-[239px] tracking-[0.5px]">Investors</a>
          <a className="w-[206px]">Careers</a>
          <a className="tracking-[-0.1px] text-[#46a2c6]">Contact</a>
        </nav>
      </header>

      <main className="flex flex-col">
        <h1 className="mt-[84px] mb-px text-center text-[60px] leading-[80px] font-bold tracking-[-0.4px]">Contact Us</h1>

        <section className="mt-[101px] flex pl-[476px]">
          <div className="flex w-[694px] flex-col items-center text-[32px] leading-[56px]">
            <FaBuilding size={84} />
            <p className="mt-[21px] text-center whitespace-nowrap">
              <span className="tracking-[0.4px]">1370 Valley Vista Dr. Suite 200</span>
              <br />
              <span className="tracking-[0.25px]">Diamond Bar, CA 91765</span>
              <br />
              <span>United States</span>
            </p>
            <FaPhone size={84} className="mt-[60px]" />
            <p className="mt-5 tracking-[0.4px]">1+ (909)979-9540</p>
            <FaEnvelope size={84} className="mt-[59px]" />
            <a className="mt-5 text-[#337ab7]">hr@phytogine.com</a>
          </div>

          <form className="ml-[110px] w-[794px] pt-[21px]">
            <label className={labelCls}>Name:</label>
            <input className={`${field} mt-[19px] h-[68px]`} />
            <label className={`${labelCls} mt-[21px]`}>Email:</label>
            <input className={`${field} mt-[19px] h-[68px]`} />
            <label className={`${labelCls} mt-[21px]`}>Message:</label>
            <div className="relative mt-[19px]">
              <textarea className={`${field} h-[108px] resize-none`} />
              <svg viewBox="0 0 16 16" className="absolute right-[3px] bottom-[3px] h-4 w-4">
                <path d="M1 15 L15 1 M9 15 L15 9" stroke="#555" strokeWidth="1.4" fill="none" />
              </svg>
            </div>
            <Captcha />
            <button type="button" className="mx-auto mt-1 block h-[72px] w-[198px] rounded-[8px] bg-[#46a2c6] text-[34.500px] leading-[71px] text-white">
              SEND
            </button>
          </form>
        </section>

        <section className="relative mt-[100px] ml-[476px] h-[1000px] w-[1606px] overflow-hidden">
          <MapCanvas />
          <PlaceCard />
        </section>
      </main>

      <footer className="mt-[100px] flex h-[268px] flex-col items-center bg-black pt-[60px]">
        <div className="h-1 w-[1280px] bg-[#46a2c6]" />
        <p className="mt-[68px] text-[24px] leading-[40px] tracking-[0.48px] text-white">COPYRIGHT ©2019 PHYTOGINE INC. ALL RIGHTS RESERVED</p>
      </footer>
    </div>
  );
}
